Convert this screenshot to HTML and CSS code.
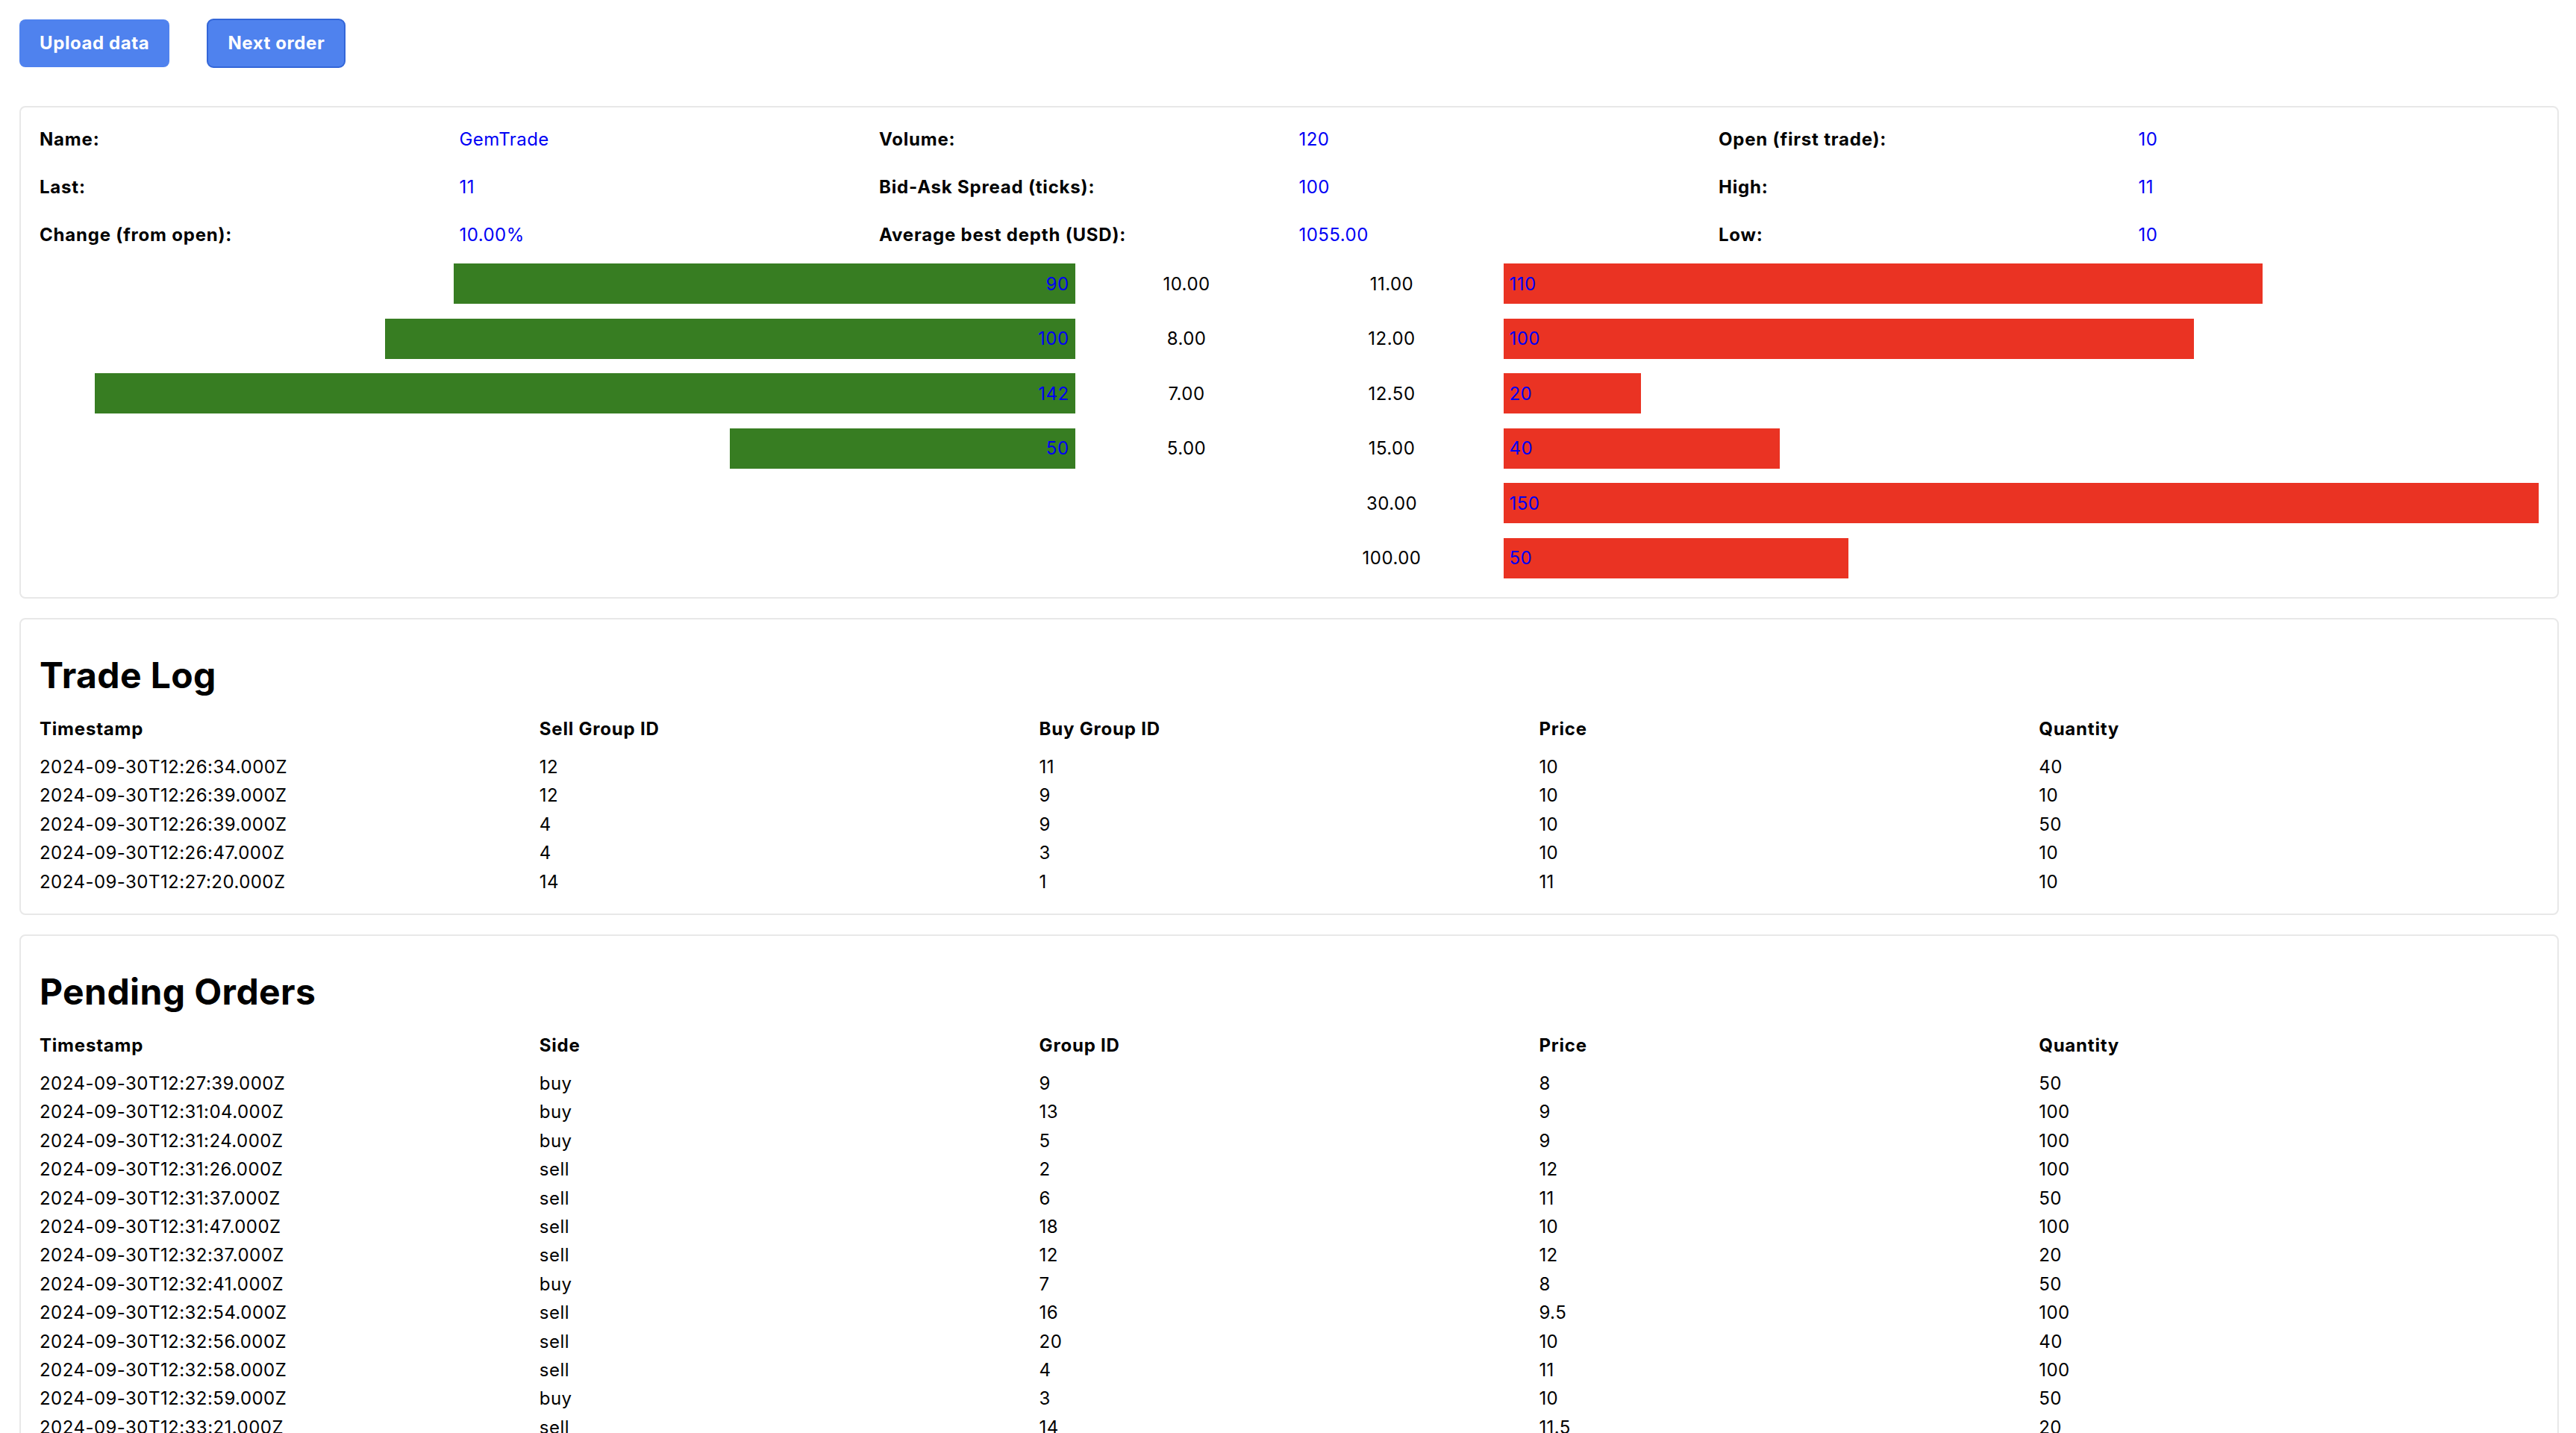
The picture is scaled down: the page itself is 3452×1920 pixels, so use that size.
FILE: index.html
```html
<!DOCTYPE html>
<html lang="en">
<head>
<meta charset="utf-8">
<title>GemTrade</title>
<link rel="stylesheet" href="styles.css">
</head>
<body>
<div class="page">
  <div class="toolbar">
    <button class="btn">Upload data</button>
    <button class="btn btn-focus">Next order</button>
  </div>

  <section class="card">
    <div class="stats">
      <div class="label">Name:</div><div class="value">GemTrade</div>
      <div class="label">Volume:</div><div class="value">120</div>
      <div class="label">Open (first trade):</div><div class="value">10</div>
      <div class="label">Last:</div><div class="value">11</div>
      <div class="label">Bid-Ask Spread (ticks):</div><div class="value">100</div>
      <div class="label">High:</div><div class="value">11</div>
      <div class="label">Change (from open):</div><div class="value">10.00%</div>
      <div class="label">Average best depth (USD):</div><div class="value">1055.00</div>
      <div class="label">Low:</div><div class="value">10</div>
    </div>

    <div class="book">
      <div class="book-row">
        <div class="bid"><div class="bar bar-bid" style="width:60%">90</div></div>
        <div class="price">10.00</div>
        <div class="price">11.00</div>
        <div class="ask"><div class="bar bar-ask" style="width:73.333%">110</div></div>
      </div>
      <div class="book-row">
        <div class="bid"><div class="bar bar-bid" style="width:66.667%">100</div></div>
        <div class="price">8.00</div>
        <div class="price">12.00</div>
        <div class="ask"><div class="bar bar-ask" style="width:66.667%">100</div></div>
      </div>
      <div class="book-row">
        <div class="bid"><div class="bar bar-bid" style="width:94.667%">142</div></div>
        <div class="price">7.00</div>
        <div class="price">12.50</div>
        <div class="ask"><div class="bar bar-ask" style="width:13.333%">20</div></div>
      </div>
      <div class="book-row">
        <div class="bid"><div class="bar bar-bid" style="width:33.333%">50</div></div>
        <div class="price">5.00</div>
        <div class="price">15.00</div>
        <div class="ask"><div class="bar bar-ask" style="width:26.667%">40</div></div>
      </div>
      <div class="book-row">
        <div class="bid"></div>
        <div class="price"></div>
        <div class="price">30.00</div>
        <div class="ask"><div class="bar bar-ask" style="width:100%">150</div></div>
      </div>
      <div class="book-row">
        <div class="bid"></div>
        <div class="price"></div>
        <div class="price">100.00</div>
        <div class="ask"><div class="bar bar-ask" style="width:33.333%">50</div></div>
      </div>
    </div>
  </section>

  <section class="card card-table">
    <h2>Trade Log</h2>
    <table>
      <thead>
        <tr><th>Timestamp</th><th>Sell Group ID</th><th>Buy Group ID</th><th>Price</th><th>Quantity</th></tr>
      </thead>
      <tbody>
        <tr><td>2024-09-30T12:26:34.000Z</td><td>12</td><td>11</td><td>10</td><td>40</td></tr>
        <tr><td>2024-09-30T12:26:39.000Z</td><td>12</td><td>9</td><td>10</td><td>10</td></tr>
        <tr><td>2024-09-30T12:26:39.000Z</td><td>4</td><td>9</td><td>10</td><td>50</td></tr>
        <tr><td>2024-09-30T12:26:47.000Z</td><td>4</td><td>3</td><td>10</td><td>10</td></tr>
        <tr><td>2024-09-30T12:27:20.000Z</td><td>14</td><td>1</td><td>11</td><td>10</td></tr>
      </tbody>
    </table>
  </section>

  <section class="card card-table">
    <h2>Pending Orders</h2>
    <table>
      <thead>
        <tr><th>Timestamp</th><th>Side</th><th>Group ID</th><th>Price</th><th>Quantity</th></tr>
      </thead>
      <tbody>
        <tr><td>2024-09-30T12:27:39.000Z</td><td>buy</td><td>9</td><td>8</td><td>50</td></tr>
        <tr><td>2024-09-30T12:31:04.000Z</td><td>buy</td><td>13</td><td>9</td><td>100</td></tr>
        <tr><td>2024-09-30T12:31:24.000Z</td><td>buy</td><td>5</td><td>9</td><td>100</td></tr>
        <tr><td>2024-09-30T12:31:26.000Z</td><td>sell</td><td>2</td><td>12</td><td>100</td></tr>
        <tr><td>2024-09-30T12:31:37.000Z</td><td>sell</td><td>6</td><td>11</td><td>50</td></tr>
        <tr><td>2024-09-30T12:31:47.000Z</td><td>sell</td><td>18</td><td>10</td><td>100</td></tr>
        <tr><td>2024-09-30T12:32:37.000Z</td><td>sell</td><td>12</td><td>12</td><td>20</td></tr>
        <tr><td>2024-09-30T12:32:41.000Z</td><td>buy</td><td>7</td><td>8</td><td>50</td></tr>
        <tr><td>2024-09-30T12:32:54.000Z</td><td>sell</td><td>16</td><td>9.5</td><td>100</td></tr>
        <tr><td>2024-09-30T12:32:56.000Z</td><td>sell</td><td>20</td><td>10</td><td>40</td></tr>
        <tr><td>2024-09-30T12:32:58.000Z</td><td>sell</td><td>4</td><td>11</td><td>100</td></tr>
        <tr><td>2024-09-30T12:32:59.000Z</td><td>buy</td><td>3</td><td>10</td><td>50</td></tr>
        <tr><td>2024-09-30T12:33:21.000Z</td><td>sell</td><td>14</td><td>11.5</td><td>20</td></tr>
      </tbody>
    </table>
  </section>
</div>
</body>
</html>
```
FILE: styles.css
```css
* {
  box-sizing: border-box;
}

html, body {
  margin: 0;
  background: #ffffff;
}

body {
  font-family: Inter, "Noto Sans", "Liberation Sans", sans-serif;
  font-size: 24px;
  letter-spacing: 0.46px;
  color: #000000;
}

.page {
  padding: 26px 23px 0 26px;
}

.toolbar {
  display: flex;
  align-items: center;
  gap: 51px;
  height: 64px;
  margin-bottom: 52px;
}

.btn {
  height: 64px;
  padding: 0 27px;
  border: none;
  border-radius: 8px;
  background: #4f82ee;
  color: #ffffff;
  font-family: Inter, "Noto Sans", sans-serif;
  font-size: 24px;
  font-weight: 700;
  letter-spacing: 0.6px;
  line-height: 64px;
}

.btn-focus {
  outline: 2px solid #3366d8;
  outline-offset: -1px;
}

.card {
  border: 2px solid #e8e8e8;
  border-radius: 8px;
  padding: 25px;
  margin-bottom: 26px;
  background: #ffffff;
}

.stats {
  display: grid;
  grid-template-columns: repeat(6, 1fr);
  column-gap: 26px;
  row-gap: 28px;
  line-height: 36px;
}

.label {
  font-weight: 700;
  letter-spacing: 0.8px;
}

.value {
  color: #0000f5;
}

.book {
  margin-top: 20px;
  display: flex;
  flex-direction: column;
  gap: 19.6px;
}

.book-row {
  display: grid;
  grid-template-columns: 1fr 251px 251px 1fr;
  column-gap: 24px;
  height: 54px;
}

.bid {
  display: flex;
  justify-content: flex-end;
}

.ask {
  display: flex;
  justify-content: flex-start;
}

.bar {
  height: 54px;
  display: flex;
  align-items: center;
  color: #0000f5;
  padding: 0 8px;
}

.bar-bid {
  background: #377d22;
  justify-content: flex-end;
}

.bar-ask {
  background: #ea3323;
  justify-content: flex-start;
}

.price {
  display: flex;
  align-items: center;
  justify-content: center;
}

.card-table {
  padding-bottom: 23px;
}

h2 {
  font-size: 48px;
  font-weight: 700;
  letter-spacing: 0.4px;
  line-height: 58px;
  margin: 21px 0 24px;
}

table {
  width: 100%;
  border-collapse: collapse;
  table-layout: fixed;
}

th, td {
  text-align: left;
  padding: 0;
  line-height: 38.4px;
  font-size: 24px;
}

th {
  font-weight: 700;
  letter-spacing: 0.8px;
  padding-bottom: 12.6px;
}
```
